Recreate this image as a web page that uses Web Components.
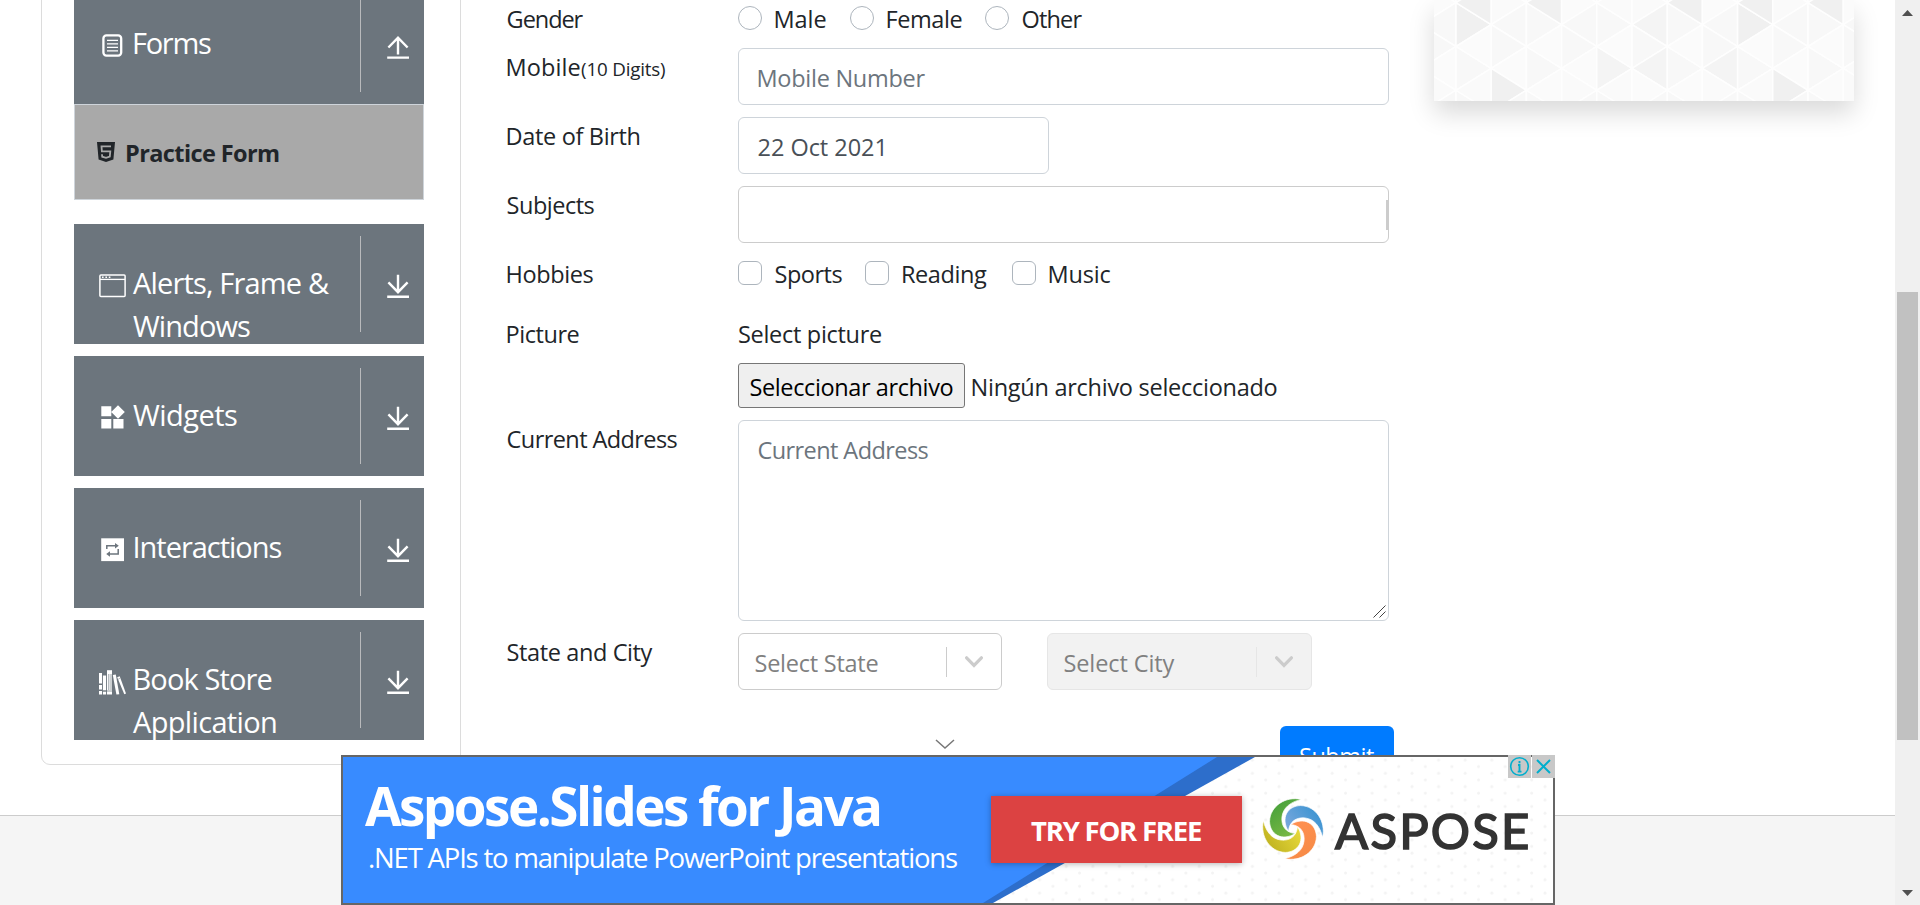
<!DOCTYPE html>
<html lang="es">
<head>
<meta charset="utf-8">
<title>Practice Form</title>
<style>
html,body{margin:0;height:100%;overflow:hidden;background:#fff}
body{font-family:"Open Sans","Noto Sans",sans-serif;color:#212529}
</style>
</head>
<body>
<demo-page></demo-page>
<script>
const define=(name,html,setup)=>customElements.define(name,class extends HTMLElement{
  constructor(){super();this.attachShadow({mode:'open'})}
  connectedCallback(){
    if(this.shadowRoot.childNodes.length)return;
    const t=document.createElement('template');
    t.innerHTML=typeof html==='function'?html(this):html;
    this.shadowRoot.append(t.content.cloneNode(true));
    if(setup)setup(this);
  }
});

/* One line of text, tracked so that its ink is exactly "w" pixels wide. */
const ctx=document.createElement('canvas').getContext('2d');
define('fit-text','<style>:host{display:inline-block;white-space:nowrap;flex:none}</style><slot></slot>',el=>{
  const cs=getComputedStyle(el),s=el.textContent,w=+el.getAttribute('w');
  ctx.font=`${cs.fontWeight} ${cs.fontSize} ${cs.fontFamily}`;
  const m=ctx.measureText(s);
  el.style.letterSpacing=(w-m.actualBoundingBoxLeft-m.actualBoundingBoxRight)/(s.length-1)+'px';
  el.style.textIndent=m.actualBoundingBoxLeft+'px';
  el.style.width=w+'px';
});

const icons={
forms:'<rect x="5.4" y="4.4" width="17.8" height="20.2" rx="3" fill="none" stroke="#fff" stroke-width="2.3"/><path d="M9 9.4h11M9 12.9h11M9 16.4h11M9 19.9h11" stroke="#fff" stroke-width="1.1"/>',
alerts:'<rect x="1.9" y="4" width="25.2" height="21.4" rx="1" fill="none" stroke="#fff" stroke-width="1.5"/><path d="M2 8.4h25" stroke="#fff" stroke-width="1.3"/><path d="M4 6.2h1.6M7.4 6.2h1.6M10.8 6.2h1.6" stroke="#fff" stroke-width="1.4"/>',
widgets:'<path fill="#fff" d="M3.3 3.3h10v10h-10zM3.3 16h10v9.6h-10zM15.3 16h10.2v9.6H15.3zM20 2.2l6.8 6.8-6.8 6.8-6.8-6.8z"/>',
interactions:'<rect x="3.2" y="3.3" width="22.8" height="22.8" fill="#fff"/><g fill="none" stroke="#6c757d" stroke-width="1.5"><path d="M8.8 14v-3.2h8.8M20.2 14v5H11.4"/></g><path fill="#6c757d" d="M17 8l3.8 2.8L17 13.6zM12 16.2L8.2 19l3.8 2.8z"/>',
book:'<g fill="#fff"><path d="M1 6h3v10.5H1zM1 18h3v4.5H1zM1 24h3v3.5H1z"/><path d="M4.9 8.4h3.2v15H4.9zM4.9 24.4h3.2v3.1H4.9z"/><path d="M9 3.2h5v24.3H9z"/><path d="M14.8 8l3-.5 3.5 19.7-2.9.3z"/><path d="M19.2 10.2l2.5-1 6.3 17.4-1.7.6z"/></g><path d="M10.8 7v16M13 7v16M5 24h9" stroke="#6c757d" stroke-width=".7"/><path d="M20.6 12l.9-.4" stroke="#6c757d"/>'
};

define('nav-panel',el=>`<style>
:host{display:flex;height:120px;background:#6c757d;color:#fff;overflow:hidden;box-sizing:border-box}
.icon{width:30px;height:30px;margin:47px 0 0 24px;flex:none}
.text{margin:37px 0 0 5px;flex:1;font-size:29px;line-height:43px;display:flex;flex-direction:column}
.side{width:64px;margin:12px 0;border-left:1px solid #b9babc;box-sizing:border-box}
.side svg{display:block;margin:38px 0 0 25px}
</style>
<svg class="icon" viewBox="0 0 30 30">${icons[el.getAttribute('icon')]}</svg>
<div class="text"><slot></slot></div>
<div class="side"><svg width="24" height="26" viewBox="0 0 24 26" fill="none" stroke="#fff" stroke-width="2.4">
${el.hasAttribute('open')?'<path d="M12 20.5V4M2.4 13.5L12 3.6l9.6 9.9M1.2 23.6h21.8"/>':'<path d="M12 .8v17M2.4 8.4L12 18.2l9.6-9.8M1.2 22.8h21.8"/>'}</svg></div>`);

define('side-nav',`<style>
:host{display:flex;flex-direction:column;gap:12px;width:420px;height:781px;margin:-16px 0 0 41px;border:1px solid #dcdcdc;border-radius:0 0 9px 9px;padding:0 36px 0 32px;box-sizing:border-box;flex:none}
.open{margin-bottom:12px;margin-top:-1px;height:216px}
.item{height:96px;border:1px solid #ced4da;background:#a9a9a9;box-sizing:border-box;display:flex;font-size:23.5px;font-weight:700;line-height:36px}
.item svg{margin:37px 0 0 22px;flex:none}
.item fit-text{margin:30px 0 0 12px}
</style>
<div class="open">
<nav-panel icon="forms" open><fit-text w="77" style="margin-left:1px">Forms</fit-text></nav-panel>
<div class="item"><svg width="18" height="20" viewBox="0 0 18 20"><path fill="#212529" d="M0 0h18l-1.6 17.6L9 20l-7.4-2.4z"/><path d="M14 4.3H4.5l.4 5h8.4l-.5 5.2L9 15.9l-3.8-1.2-.2-2.4" fill="none" stroke="#a9a9a9" stroke-width="1.8"/></svg><fit-text w="152">Practice Form</fit-text></div>
</div>
<nav-panel icon="alerts"><fit-text w="196">Alerts, Frame &amp;</fit-text><fit-text w="117">Windows</fit-text></nav-panel>
<nav-panel icon="widgets"><fit-text w="104">Widgets</fit-text></nav-panel>
<nav-panel icon="interactions"><fit-text w="147" style="margin-left:1.5px">Interactions</fit-text></nav-panel>
<nav-panel icon="book"><fit-text w="137" style="margin-left:1.5px">Book Store</fit-text><fit-text w="143">Application</fit-text></nav-panel>`);

define('form-row',`<style>
:host{display:grid;grid-template-columns:231px 1fr;margin-bottom:12px;font-size:23.5px;line-height:36px}
.label{padding:1px 0 0 .6px;height:35px;white-space:nowrap}
</style><div class="label"><slot name="label"></slot></div><div><slot></slot></div>`);

define('text-field',`<style>
:host{display:block;box-sizing:border-box;height:57px;border:1px solid #ced4da;border-radius:6px;padding:11px 0 0 19.5px;color:#6c757d;position:relative}
.grip{position:absolute;right:2px;bottom:2px;display:none}
:host([grip]) .grip{display:block}
:host([grip]){height:201px}
:host([bar]) .bar{position:absolute;right:0;top:13px;width:2px;height:30px;background:#ccc}
</style><slot></slot><span class="bar"></span><svg class="grip" width="13" height="13"><path d="M.5 12.5l12-12M6.5 12.5l6-6" stroke="#444" stroke-width="1"/></svg>`);

define('choice-item',`<style>
:host{display:flex;height:36px}
i{width:24px;height:24px;box-sizing:border-box;border:1px solid #adb5bd;border-radius:6px;margin:6px 13px 0 0}
:host([round]) i{border-radius:50%}
.t{padding:1px 0 0 .5px}
</style><i></i><div class="t"><slot></slot></div>`);

define('pick-list',`<style>
:host{display:flex;align-items:center;box-sizing:border-box;height:57px;border:1px solid #ccc;border-radius:6px;color:gray;padding-left:16.5px}
:host([off]){background:#f2f2f2;border-color:#e6e6e6}
.t{flex:1;padding-top:3px}
.s{width:1px;height:30px;background:#ccc}
:host([off]) .s{background:#e6e6e6}
svg{margin:0 18px 0 18px}
</style><div class="t"><slot></slot></div><span class="s"></span><svg width="18" height="12" viewBox="0 0 18 12"><path d="M1.6 1.8L9 9.4l7.4-7.6" fill="none" stroke="#ccc" stroke-width="3.2" stroke-linecap="round"/></svg>`);

define('student-form',`<style>
:host{display:block;width:883px;margin-left:46px;flex:none}
.f{width:882px}
.choices{display:flex}
.file{display:flex;height:45px;margin-top:12px}
.btn{width:227px;height:45px;box-sizing:border-box;border:1px solid #767676;border-radius:3px;background:#efefef;color:#000;padding:5px 0 0 11.5px}
.submit{width:114px;height:57px;margin:36px 0 0 773px;background:#007bff;border-radius:6px;color:#fff;font-size:23.5px;line-height:36px;padding:12px 0 0 20px;box-sizing:border-box}
small{font-size:18.8px}
</style>
<div class="f">
<form-row><fit-text slot="label" w="76">Gender</fit-text>
 <div class="choices"><choice-item round style="width:112px"><fit-text w="50">Male</fit-text></choice-item><choice-item round style="width:135px"><fit-text w="74">Female</fit-text></choice-item><choice-item round><fit-text w="60">Other</fit-text></choice-item></div></form-row>
<form-row><span slot="label"><fit-text w="72">Mobile</fit-text><small><fit-text w="84" style="margin-left:1.5px">(10 Digits)</fit-text></small></span><text-field><fit-text w="167">Mobile Number</fit-text></text-field></form-row>
<form-row><fit-text slot="label" w="132">Date of Birth</fit-text><text-field style="width:311px;color:#495057"><fit-text w="125">22 Oct 2021</fit-text></text-field></form-row>
<form-row><fit-text slot="label" w="87">Subjects</fit-text><text-field bar style="border-color:#ccc"></text-field></form-row>
<form-row style="height:48px"><fit-text slot="label" w="86">Hobbies</fit-text>
 <div class="choices"><choice-item style="width:127px"><fit-text w="67">Sports</fit-text></choice-item><choice-item style="width:147px"><fit-text w="84" style="margin-left:.5px">Reading</fit-text></choice-item><choice-item><fit-text w="61">Music</fit-text></choice-item></div></form-row>
<form-row><fit-text slot="label" w="71">Picture</fit-text><div><div style="height:35px;padding:1px 0 0 1px"><fit-text w="142">Select picture</fit-text></div><div class="file"><div class="btn"><fit-text w="202">Seleccionar archivo</fit-text></div><fit-text w="304" style="margin:6px 0 0 7.6px">Ningún archivo seleccionado</fit-text></div></div></form-row>
<form-row><fit-text slot="label" w="170">Current Address</fit-text><text-field grip><fit-text w="170">Current Address</fit-text></text-field></form-row>
<form-row><fit-text slot="label" w="145">State and City</fit-text><div style="display:flex;gap:45px"><pick-list style="width:264px"><fit-text w="122">Select State</fit-text></pick-list><pick-list off style="width:265px"><fit-text w="110">Select City</fit-text></pick-list></div></form-row>
<div class="submit"><fit-text w="74">Submit</fit-text></div>
</div>`);

/* Pale triangular mosaic; columns 35.2px wide, vertices 43.8px apart. */
define('mosaic-card',()=>{
  const W=35.2,H=43.8,dark={'1,R,24.5':1,'1,L,2.7':1,'3,L,2.7':1,'7,L,2.7':1,'9,L,2.7':1,'11,L,2.7':1,'9,R,24.5':1,'6,L,24.5':2,'2,R,90.5':1,'10,R,90.5':1,'5,R,68.5':2,'6,L,68.5':2,'8,L,68.5':2,'1,L,112':1,'9,L,112':1};
  let p='';
  for(let c=0;c<13;c++)for(let r=-1;r<4;r++){
    const x0=22-W+c*W,x1=x0+W,even=c%2;
    const a=(even?2.7:24.5)+r*H,b=(even?24.5:2.7)+r*H;
    const tone=(side,y)=>{let v=dark[Object.keys(dark).find(k=>{const q=k.split(',');return +q[0]===c&&q[1]===side&&Math.abs(q[2]-y)<2})];
      return v===1?'#f0f0f0':v===2?'#f4f4f4':['#fafafa','#f8f8f8','#fbfbfb','#f8f8f8'][(c*3+(r+1)*5+(side==='R'?1:0)+c*r+4)%4]};
    p+=`<path fill="${tone('R',b)}" d="M${x0} ${b-H/2}L${x1} ${b}L${x0} ${b+H/2}z"/>`;
    p+=`<path fill="${tone('L',a)}" d="M${x1} ${a-H/2}L${x0} ${a}L${x1} ${a+H/2}z"/>`;
  }
  return `<style>:host{display:block;width:420px;height:101px;margin-left:44px;background:#fbfbfb;box-shadow:0 12px 24px rgba(0,0,0,.15);flex:none}svg{display:block}</style>
<svg width="420" height="101" stroke="#fefefe" stroke-width="1.5">${p}</svg>`});

define('scroll-rail',`<style>
:host{display:flex;flex-direction:column;align-items:center;justify-content:space-between;width:25px;height:905px;background:#f0f0f0;flex:none;box-sizing:border-box;padding:10px 0 9px}
b{width:21px;height:448px;background:#c1c1c1;margin-top:126px}
svg{display:block}
</style><svg width="11" height="6"><path d="M0 6L5.5 0 11 6z" fill="#505050"/></svg><b></b><svg width="11" height="6"><path d="M0 0L5.5 6 11 0z" fill="#505050"/></svg>`);

define('swirl-logo',()=>{
  const d='M153 61C108 51 62 80 61 125C62 163 97 184 136 160C108 158 94 138 97 112C100 86 120 69 153 61Z';
  const g=(id,a,b)=>`<linearGradient id="${id}" x1="0" y1="0" x2="0.6" y2="1"><stop offset="0" stop-color="${a}"/><stop offset="1" stop-color="${b}"/></linearGradient>`;
  return `<style>:host{display:block}svg{display:block}</style><svg width="62" height="62" viewBox="39 57 180 180"><defs>${g('g','#3f9d3a','#79b843')}${g('b','#2f90cf','#78a7dd')}${g('o','#f58a45','#ff9050')}${g('y','#b8ab1c','#e6d83a')}</defs>
<g stroke="#fff" stroke-width="2"><path d="${d}" fill="url(#y)" transform="rotate(270 129 147)"/><path d="${d}" fill="url(#g)"/><path d="${d}" fill="url(#b)" transform="rotate(90 129 147)"/><path d="${d}" fill="url(#o)" transform="rotate(180 129 147)"/></g></svg>`});

define('ad-banner',`<style>
:host{position:absolute;left:341px;top:755px;width:1214px;height:150px;box-sizing:border-box;border:2px solid #666;background:#fff}
.bg{position:absolute;left:0;top:0}
.row{position:relative;display:flex;height:146px;color:#fff}
.copy{width:648px;display:flex;flex-direction:column;padding-top:19px;box-sizing:border-box}
h2{margin:0 0 4px 22px;font-size:53px;line-height:60px;font-weight:700}
p{margin:0 0 0 27px;font-size:27.5px;line-height:36px;font-weight:400}
.try{width:251px;height:67px;margin-top:39px;background:#dc4242;box-shadow:0 1px 6px rgba(0,0,0,.3);font-size:27.5px;font-weight:700;line-height:36px;padding:17px 0 0 40px;box-sizing:border-box}
swirl-logo{margin:41px 0 0 20px}
.brand{margin:43px 0 0 11px;font:400 49px/60px Lato,sans-serif;color:#333;-webkit-text-stroke:1.6px #333}
.tools{position:absolute;right:-2px;top:-2px;display:flex;gap:1px}
.tools svg{background:#c8c8c8}
.chev{position:absolute;left:592px;top:-18px}
</style>
<svg class="bg" width="1210" height="146"><defs><pattern id="d" width="26.6" height="13.3" patternUnits="userSpaceOnUse"><circle cx="5" cy="3" r="1.5" fill="#f3f3f3"/><circle cx="18.3" cy="9.6" r="1.5" fill="#f3f3f3"/></pattern></defs>
<rect width="1210" height="146" fill="#fff"/><rect width="1210" height="146" fill="url(#d)"/><path d="M0 0H912L650 146H0z" fill="#2d6ecb"/><path d="M0 0H874L640 146H0z" fill="#388bff"/></svg>
<svg class="chev" width="20" height="10"><path d="M1 1l9 8 9-8" fill="none" stroke="#777" stroke-width="1.5"/></svg>
<div class="row"><div class="copy"><h2><fit-text w="515">Aspose.Slides for Java</fit-text></h2><p><fit-text w="587">.NET APIs to manipulate PowerPoint presentations</fit-text></p></div>
<div class="try"><fit-text w="170">TRY FOR FREE</fit-text></div><swirl-logo></swirl-logo><div class="brand"><fit-text w="193">ASPOSE</fit-text></div></div>
<div class="tools"><svg width="23" height="23"><circle cx="11.5" cy="11.5" r="8.8" fill="none" stroke="#00aecd" stroke-width="1.6"/><path d="M11.5 6v2.2M10 10h1.5v6.3M9.7 16.6h3.8" fill="none" stroke="#00aecd" stroke-width="1.9"/></svg><svg width="23" height="23"><path d="M5 5l13 13M18 5L5 18" stroke="#00aecd" stroke-width="2"/></svg></div>`);

define('demo-page',`<style>
:host{display:flex;position:relative;width:1920px;height:905px;overflow:hidden}
.page{width:1895px;display:flex;flex-direction:column}
main{height:815px;display:flex;align-items:flex-start;flex:none}
footer{flex:1;border-top:1px solid #ccc;background:#f5f5f5}
</style>
<div class="page"><main><side-nav></side-nav><student-form></student-form><mosaic-card></mosaic-card></main><footer></footer></div>
<scroll-rail></scroll-rail><ad-banner></ad-banner>`);
</script>
</body>
</html>
